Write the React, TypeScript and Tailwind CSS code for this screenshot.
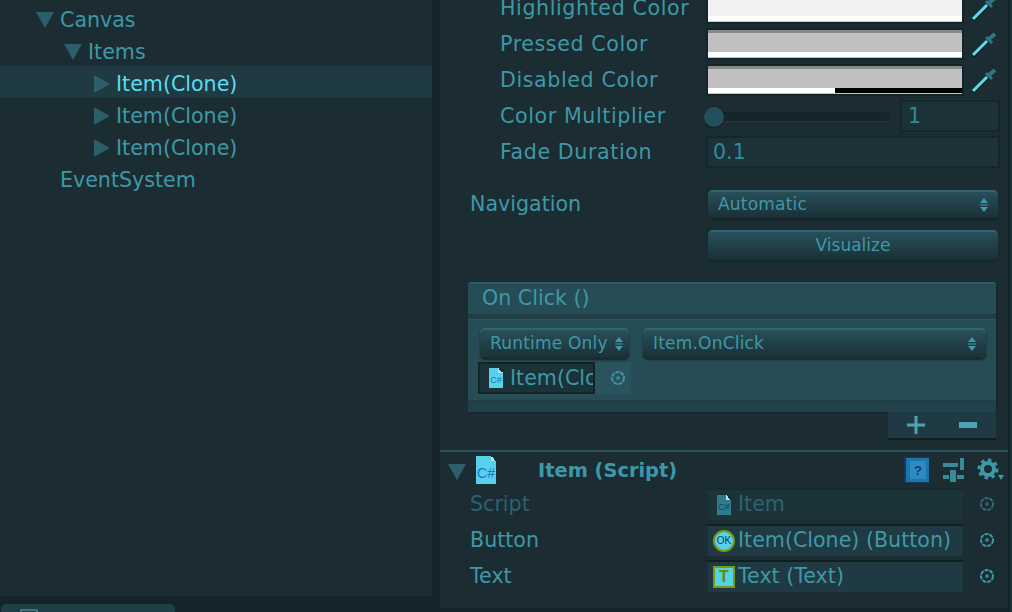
import React from "react";

const TEXT = "text-[#3f98a7]";

function Tri({ dir }: { dir: "down" | "right" }) {
  return dir === "down" ? (
    <svg width="18" height="16" viewBox="0 0 18 16" className="shrink-0 -ml-[2px]">
      <path d="M0 0H18L9 16Z" fill="#2c5f69" />
    </svg>
  ) : (
    <svg width="16" height="18" viewBox="0 0 16 18" className="shrink-0">
      <path d="M0 0L16 9L0 18Z" fill="#2c5f69" />
    </svg>
  );
}

function TreeRow({ label, indent, dir, active }: { label: string; indent: number; dir?: "down" | "right"; active?: boolean }) {
  return (
    <div className={`h-8 pt-[4px] flex items-center ${active ? "bg-[#1f3a42] text-[#5adcf0]" : TEXT}`} style={{ paddingLeft: indent }}>
      <div className="w-[22px] shrink-0 flex">{dir && <Tri dir={dir} />}</div>
      <span>{label}</span>
    </div>
  );
}

function Dropper() {
  return (
    <svg width="28" height="28" viewBox="0 0 28 28" className="shrink-0">
      <path d="M2 27L5 27L20 12L18 10L2 25Z" fill="#0d1a1d" />
      <path d="M3 25L17 11" stroke="#5adcf0" strokeWidth="3" />
      <path d="M16 7L22 13" stroke="#2f7786" strokeWidth="3" />
      <path d="M19 9L25 4" stroke="#2f7786" strokeWidth="4" />
    </svg>
  );
}

function Swatch({ label, base, half, top }: { label: string; base: string; half?: boolean; top?: boolean }) {
  return (
    <div className="h-9 flex items-center">
      <Label>{label}</Label>
      <div className="w-[258px] h-8 border-2 border-[#13252a] flex flex-col shrink-0" style={{ background: base }}>
        <div className={`h-[3px] ${top ? "bg-transparent" : "bg-[#888888]"}`} />
        <div className="flex-1" />
        <div className="h-[5px] flex">
          <div className="flex-1 bg-white" />
          <div className={`flex-1 ${half ? "bg-black" : "bg-white"}`} />
        </div>
        <div className={`h-[1px] ${top ? "bg-[#cccccc]" : "bg-transparent"}`} />
      </div>
      <div className="ml-[6px]"><Dropper /></div>
    </div>
  );
}

function Label({ children }: { children: React.ReactNode }) {
  return <span className={`w-[266px] pl-[60px] shrink-0 whitespace-nowrap tracking-[0.6px] ${TEXT}`}>{children}</span>;
}

function Target({ dim }: { dim?: boolean }) {
  return (
    <svg width="16" height="16" viewBox="0 0 16 16" className={dim ? "opacity-60" : ""}>
      <circle cx="8" cy="8" r="6" fill="none" stroke="#3f98a7" strokeWidth="2" strokeDasharray="4 1" />
      <rect x="6.5" y="6.5" width="3" height="3" fill="#3f98a7" />
    </svg>
  );
}

function CSharp({ w = 20, h = 28, dim, fs = 14, pb = 4 }: { w?: number; h?: number; dim?: boolean; fs?: number; pb?: number }) {
  return (
    <div
      className={`relative shrink-0 flex items-end justify-center ${dim ? "bg-[#2f7a8c] text-[#1b3f5a]" : "bg-[#55d2ea] text-[#2a6fc8]"} font-['Liberation_Sans'] leading-none`}
      style={{ width: w, height: h, fontSize: fs, paddingBottom: pb }}
    >
      C#
      <div className="absolute top-0 right-0 w-[5px] h-[5px] bg-linear-to-bl from-[#1b2d32] from-50% to-[#a8e8f4] to-50%" />
    </div>
  );
}

function Arrows() {
  return (
    <svg width="8" height="14" viewBox="0 0 8 14" className="shrink-0 mt-[2px]">
      <path d="M4 0L8 5H0Z M4 14L0 9H8Z M0 6.5H8V7.5H0Z" fill="#3f98a7" />
    </svg>
  );
}

function Drop({ label, cls }: { label: string; cls: string }) {
  return (
    <div className={`rounded-[5px] border-t-2 border-[#2f6672] bg-linear-to-b from-[#28505a] to-[#1a3036] shadow-[0_2px_2px_#14252a] flex items-center justify-between pb-[2px] tracking-[0.2px] text-[17px] ${TEXT} ${cls}`}>
      <span>{label}</span>
      <Arrows />
    </div>
  );
}

function RefRow({ label, icon, text, dim }: { label: string; icon: React.ReactNode; text: string; dim?: boolean }) {
  return (
    <div className="h-9 flex items-center">
      <span className={`w-[266px] pl-[30px] shrink-0 ${dim ? "text-[#2c626e]" : TEXT}`}>{label}</span>
      <div className={`w-[258px] h-8 flex items-center pl-[5px] pb-[1px] gap-[3px] border-t-2 border-x-2 border-x-[#1a3036] ${dim ? "border-t-[#172a2f] text-[#2c626e] bg-[#1c333a]" : "border-t-[#10201f] bg-[#1f3a42] " + TEXT} whitespace-nowrap overflow-hidden shrink-0`}>
        <div className="w-[22px] flex justify-center shrink-0">{icon}</div>
        <span>{text}</span>
      </div>
      <div className="ml-[15px]"><Target dim={dim} /></div>
    </div>
  );
}

export default function App() {
  return (
    <div className="w-[1012px] h-[612px] overflow-hidden flex bg-[#1b2d32] font-['DejaVu_Sans',sans-serif] text-[20.6px] leading-none">
      {/* Hierarchy */}
      <div className="w-[432px] h-full shrink-0 flex flex-col">
        <div className="flex-1 pt-[2px]">
          <TreeRow label="Canvas" indent={38} dir="down" />
          <TreeRow label="Items" indent={66} dir="down" />
          <TreeRow label="Item(Clone)" indent={94} dir="right" active />
          <TreeRow label="Item(Clone)" indent={94} dir="right" />
          <TreeRow label="Item(Clone)" indent={94} dir="right" />
          <TreeRow label="EventSystem" indent={38} />
        </div>
        <div className="h-[16px] bg-[#14242a] pl-[1px] pt-[8px]">
          <div className="w-[174px] h-[8px] rounded-t-[5px] bg-[#1f3f47] pl-[19px] pt-[5px]">
            <div className="w-[18px] h-[3px] border-2 border-b-0 border-[#3a7480] rounded-t-[1px]" />
          </div>
        </div>
      </div>
      <div className="w-[8px] h-full shrink-0 bg-[#14242a]" />

      {/* Inspector */}
      <div className="flex-1 h-full flex flex-col">
        <div className="-mt-[10px] shrink-0">
          <Swatch label="Highlighted Color" base="#f1f1f1" top />
          <Swatch label="Pressed Color" base="#c0c0c0" />
          <Swatch label="Disabled Color" base="#c0c0c0" half />
          <div className="h-9 flex items-center">
            <Label>Color Multiplier</Label>
            <div className="relative w-[184px] h-[10px] rounded-full bg-[#14262b] border-b border-[#1f3a42] shrink-0 mt-[2px]">
              <div className="absolute -left-[2px] -top-[5px] w-5 h-5 rounded-full bg-[#23505c] shadow-[0_1px_2px_#10201f]" />
            </div>
            <div className="ml-[10px] w-[100px] h-8 border-2 border-[#14262b] bg-[#1c3238] flex items-center pl-[6px] text-[#2f8a9c]">1</div>
          </div>
          <div className="h-9 flex items-center">
            <Label>Fade Duration</Label>
            <div className="w-[294px] h-8 border-2 border-[#14262b] bg-[#1c3238] flex items-center pl-[5px] text-[#2f8a9c]">0.1</div>
          </div>
        </div>

        <div className="mt-[16px] h-9 flex items-center shrink-0">
          <span className={`w-[268px] pl-[30px] shrink-0 ${TEXT}`}>Navigation</span>
          <Drop label="Automatic" cls="w-[290px] h-[28px] pl-[10px] pr-[10px]" />
        </div>
        <div className="mt-[8px] pl-[268px] shrink-0">
          <div className={`w-[290px] h-[30px] rounded-[5px] border-t-2 border-[#2f6672] bg-linear-to-b from-[#28505a] to-[#1a3036] shadow-[0_2px_2px_#14252a] flex items-center justify-center pb-[2px] text-[17px] ${TEXT}`}>Visualize</div>
        </div>

        {/* On Click */}
        <div className="mt-[22px] ml-[28px] w-[528px] shrink-0">
          <div className="bg-[#264c55] rounded-t-[3px] border-t-2 border-[#2c5d68] shadow-[1px_1px_1px_#14242a]">
            <div className={`h-[30px] flex items-center pl-[14px] pb-[2px] ${TEXT}`}>On Click ()</div>
            <div className="h-[6px] bg-[#1f3e46] border-b border-[#2a5661]" />
            <div className="h-[82px] pl-[10px] pt-[8px] border-b-2 border-[#1f3e46]">
              <div className="flex gap-[14px]">
                <Drop label="Runtime Only" cls="w-[149px] h-[30px] pl-[10px] pr-[6px] ml-[2px] whitespace-nowrap" />
                <Drop label="Item.OnClick" cls="w-[343px] h-[30px] pl-[10px] pr-[10px]" />
              </div>
              <div className="mt-[4px] flex h-8">
                <div className={`w-[117px] h-8 bg-[#1b3238] border-2 border-[#13232a] flex items-center pl-[9px] gap-[7px] overflow-hidden whitespace-nowrap ${TEXT}`}>
                  <CSharp w={14} h={20} fs={9} pb={3} />
                  <span>Item(Clone)</span>
                </div>
                <div className="w-[36px] h-8 bg-[#2a535d] flex items-center pl-[15px]"><Target /></div>
              </div>
            </div>
            <div className="h-[10px] bg-[#21424b]" />
          </div>
          <div className="flex justify-end">
            <div className="w-[108px] h-[28px] bg-[#1f3a42] border-b-2 border-[#10201f] flex items-center justify-around px-[2px]">
              <svg width="18" height="18" viewBox="0 0 18 18"><path d="M9 0V18M0 9H18" stroke="#4aa4b4" strokeWidth="3" /></svg>
              <svg width="18" height="6" viewBox="0 0 18 6"><rect width="18" height="6" fill="#4aa4b4" /></svg>
            </div>
          </div>
        </div>

        {/* Item (Script) */}
        <div className="mt-[10px] border-t-2 border-[#27535c] shrink-0">
          <div className="h-[34px] pt-[2px] flex items-center pl-[10px]">
            <div className="mt-[3px] flex"><Tri dir="down" /></div>
            <div className="ml-[10px]"><CSharp /></div>
            <span className={`ml-[42px] font-bold text-[19.4px] pt-[2px] ${TEXT}`}>Item (Script)</span>
            <div className="ml-auto flex items-center pr-[3px]">
              <svg width="26" height="26" viewBox="0 0 26 26">
                <rect x="0" y="0" width="25" height="26" fill="#123a5c" />
                <rect x="2" y="1" width="23" height="24" fill="#1f74ac" />
                <rect x="6" y="4" width="16" height="18" fill="#2d8bc4" />
                <text x="14" y="18" fontSize="13" fontWeight="bold" textAnchor="middle" fill="#123a5c" fontFamily="Liberation Sans">?</text>
              </svg>
              <svg width="22" height="26" viewBox="0 0 22 26" className="ml-[13px]">
                <path d="M0 6H15V10H0Z M17 1H21V13H17Z M0 18H6V22H0Z M7 13H13V25H7Z M14 18H21V22H14Z" fill="#3a8a9a" />
              </svg>
              <svg width="28" height="24" viewBox="0 0 28 24" className="ml-[12px]">
                <circle cx="11" cy="11" r="6" fill="none" stroke="#3f98a7" strokeWidth="4" />
                <circle cx="11" cy="11" r="9" fill="none" stroke="#3f98a7" strokeWidth="3" strokeDasharray="3.5 3.5" />
                <path d="M21 17H27L24 22Z" fill="#3f98a7" />
              </svg>
            </div>
          </div>
          <RefRow label="Script" dim icon={<CSharp w={14} h={20} fs={9} pb={3} dim />} text="Item" />
          <RefRow
            label="Button"
            icon={<div className="w-[22px] h-[22px] rounded-full bg-[#55d2ea] border-2 border-[#7a9a10] flex items-center justify-center text-[10px] text-[#14414f] font-['Liberation_Sans']">OK</div>}
            text="Item(Clone) (Button)"
          />
          <RefRow
            label="Text"
            icon={<div className="w-[22px] h-[22px] bg-[#55d2ea] border-2 border-[#7a9a10] flex items-center justify-center text-[16px] font-bold text-[#6a8a00] font-['Liberation_Sans']">T</div>}
            text="Text (Text)"
          />
          <div className="mt-[14px] h-[4px] bg-[#14242a]" />
        </div>
      </div>
      <div className="w-[4px] h-full shrink-0 bg-[#1c3238] border-l-2 border-[#14242a]" />
    </div>
  );
}
